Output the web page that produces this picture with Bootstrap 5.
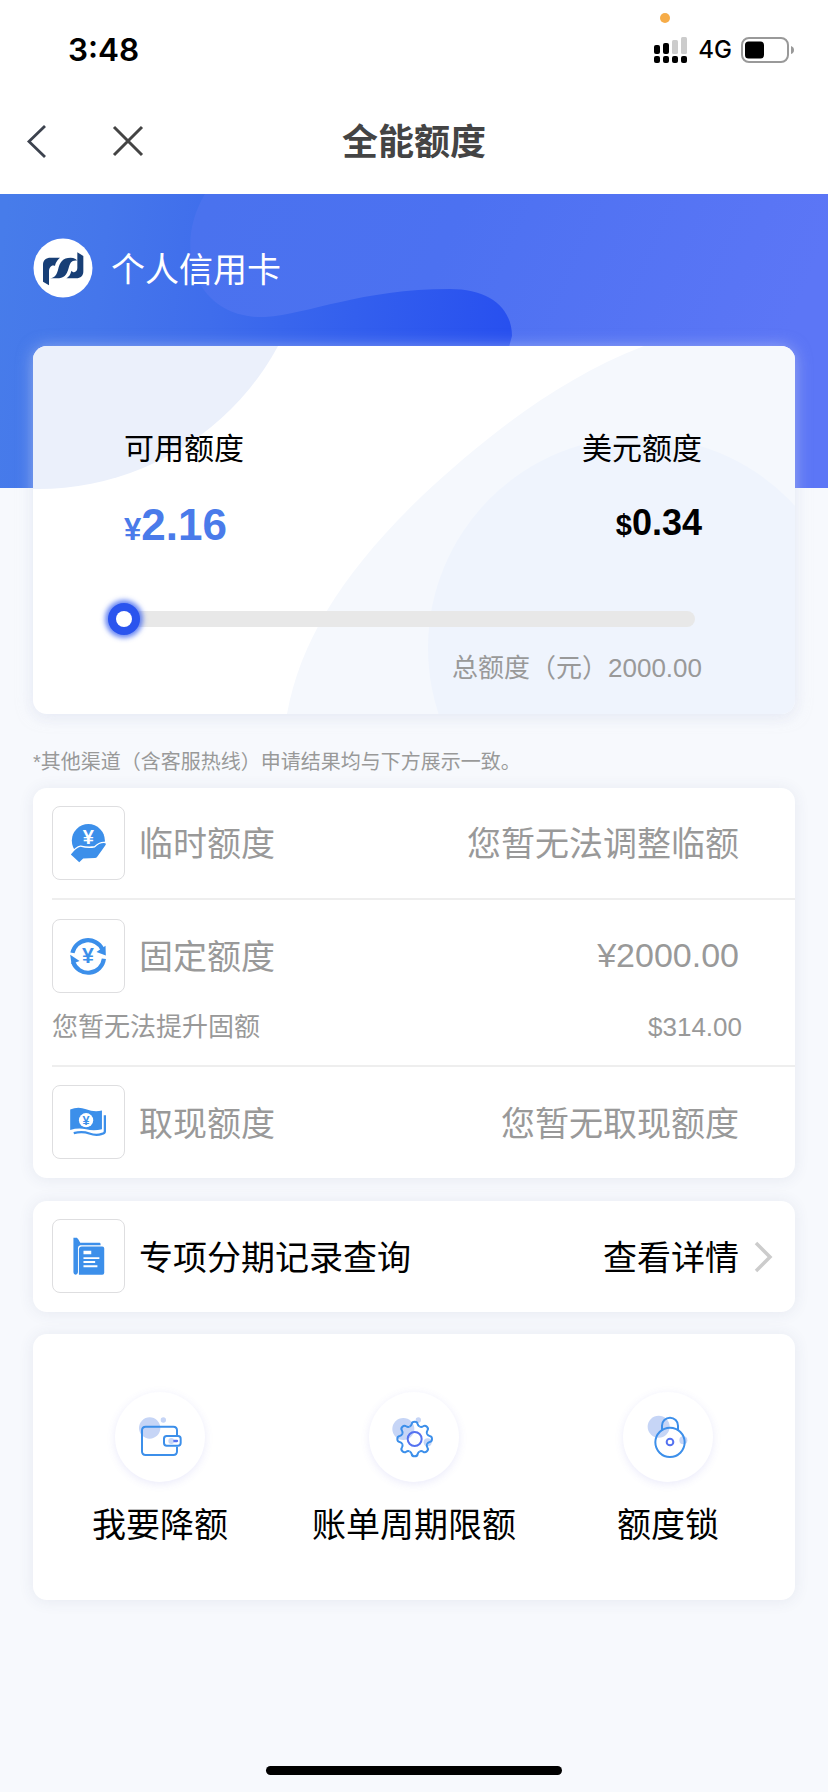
<!DOCTYPE html>
<html lang="zh-CN">
<head>
<meta charset="utf-8">
<meta name="viewport" content="width=device-width, initial-scale=1">
<title>全能额度</title>
<link href="https://cdn.jsdelivr.net/npm/bootstrap@5.3.0/dist/css/bootstrap.min.css" rel="stylesheet">
<style>
  body { font-family: "Liberation Sans", "Noto Sans CJK SC", sans-serif; background: #f7f9fd; color: #000; min-height: 1792px; line-height: 1; }
  svg { display: block; flex: none; }
  .status-bar { height: 98px; padding: 2px 33px 0 68px; font-family: Inter, sans-serif; background: #fff; }
  .clock { font-size: 31.5px; font-weight: 600; }
  .net { font-size: 24px; font-weight: 500; margin: 0 9px 0 11px; }
  .rec-dot { width: 10px; height: 10px; left: 660px; top: 13px; background: #f6ac48; }
  .title-bar { height: 96px; padding-left: 26px; background: #fff; }
  .title-bar h1 { font-size: 36px; font-weight: 700; color: #444; left: 0; right: 0; top: 25px; line-height: 40px; }
  .hero { padding: 44px 33px 0; }
  .hero-bg { left: 0; top: 0; }
  .owner { height: 60px; font-size: 34px; color: #fff; gap: 18px; margin-bottom: 48px; }
  .owner span { padding-top: 3px; }
  .panel { border-radius: 14px; background: #fff; box-shadow: 0 1px 16px rgba(60, 70, 110, .09); }
  .limit-card { height: 368px; padding: 85px 93px 0 91px; border-radius: 14px; background: #fff; box-shadow: 0 1px 16px rgba(225, 232, 250, .5), 0 4px 14px rgba(60, 70, 110, .06); }
  .limit-bg { left: 0; top: 0; border-radius: 14px; }
  .limit-name { font-size: 30px; line-height: 36px; }
  .amount { font-weight: 700; line-height: 50px; white-space: nowrap; }
  .cny { font-size: 44px; color: #4a7bea; margin-top: 33px; }
  .cny span { font-size: 31px; }
  .usd { font-size: 36px; margin-top: 31px; }
  .usd span { font-size: 29px; }
  .track { height: 16px; border-radius: 8px; background: #e8e8e8; margin: 56px 7px 0 0; }
  .knob { width: 32px; height: 32px; left: -16px; top: -8px; background: #2a54ee; box-shadow: 0 0 5px 3px rgba(42, 84, 238, .7); }
  .knob::after { content: ""; position: absolute; left: 8px; top: 8px; width: 16px; height: 16px; border-radius: 50%; background: #fff; }
  .sum { font-size: 26px; line-height: 32px; color: #999; margin-top: 25px; }
  .hint { font-size: 20px; line-height: 26px; color: #999; margin: 35px 33px 13px; }
  .lists { display: flex; flex-direction: column; gap: 23px; margin: 0 33px; }
  .entry { height: 110px; padding-right: 56px; font-size: 34px; line-height: 40px; }
  .entry-box { margin-left: 19px; }
  .rule { border-bottom: 2px solid #eee; }
  .tile { width: 73px; height: 74px; border: 1px solid #dedee0; border-radius: 8px; margin: -1px 14px 0 0; }
  .entry > span { padding-top: 2px; }
  .entry .num { padding: 0 0 2px; }
  .dim { color: #999; }
  .fixed-limit { height: 167px; }
  .fixed-limit .entry { height: 112px; }
  .sub { font-size: 26px; line-height: 30px; padding-right: 53px; }
  .tail { height: 111px; }
  .go { margin: 0 -35px 0 15px; }
  .round-ico { width: 90px; height: 90px; box-shadow: 0 2px 8px rgba(90, 90, 220, .13); margin-bottom: 23px; }
  .actions { height: 266px; padding-top: 58px; margin-top: -1px; font-size: 34px; line-height: 40px; }
  .home-bar { width: 296px; height: 9px; left: 266px; top: 1766px; background: #000; }
</style>
</head>
<body class="position-relative">
<header>
  <div class="status-bar d-flex align-items-center position-relative">
    <span class="rec-dot rounded-circle position-absolute"></span>
    <span class="clock me-auto">3:48</span>
    <svg width="33" height="28" viewBox="0 0 33 28"><g fill="#ccc"><rect x="18" y="4" width="6" height="14" rx="1.5"/><rect x="27" y="1" width="6" height="17" rx="1.5"/></g><rect y="9" width="6" height="9" rx="2"/><rect x="9" y="7" width="6" height="11" rx="2"/><rect y="20" width="6" height="7" rx="2"/><rect x="9" y="20" width="6" height="7" rx="2"/><rect x="18" y="20" width="6" height="7" rx="2"/><rect x="27" y="20" width="6" height="7" rx="2"/></svg>
    <span class="net">4G</span>
    <svg width="54" height="26" viewBox="0 0 54 26"><rect x="1" y="1" width="46" height="24" rx="7" fill="none" stroke="#999" stroke-width="2"/><rect x="4" y="4.500" width="19" height="17" rx="3.500"/><path d="M50 9q3 1 3 4t-3 4z" fill="#999"/></svg>
  </div>
  <div class="title-bar d-flex position-relative">
    <svg width="22" height="88" viewBox="0 0 22 88"><path d="M19 28 3 43.500 19 59" fill="none" stroke="#3c424e" stroke-width="2.800"/></svg>
    <svg class="ms-5" width="66" height="88" viewBox="0 0 66 88"><path d="M18 29 46 57M46 29 18 57" fill="none" stroke="#444" stroke-width="3"/></svg>
    <h1 class="position-absolute text-center m-0">全能额度</h1>
  </div>
</header>

<section class="hero position-relative">
  <svg class="hero-bg position-absolute" width="828" height="294" viewBox="0 0 828 294">
    <defs>
      <linearGradient id="sky" x1="0" y1="0" x2="1" y2=".15"><stop offset="0" stop-color="#477cea"/><stop offset=".25" stop-color="#4a72ee"/><stop offset=".55" stop-color="#4c71f1"/><stop offset="1" stop-color="#5c76f6"/></linearGradient>
      <linearGradient id="wave" gradientUnits="userSpaceOnUse" x1="0" y1="60" x2="510" y2="120"><stop offset="0" stop-color="#477cea"/><stop offset=".2" stop-color="#4576eb"/><stop offset=".42" stop-color="#3f6dec"/><stop offset=".7" stop-color="#335fee"/><stop offset="1" stop-color="#2850ef"/></linearGradient>
    </defs>
    <rect width="828" height="294" fill="url(#sky)"/>
    <path d="M0 0H205C190 25 185 55 197 84C210 112 236 124 265 123C310 120 360 95 450 95C488 95 512 113 512 142L507 160V294H0Z" fill="url(#wave)"/>
  </svg>
  <div class="owner d-flex align-items-center position-relative">
    <svg width="60" height="60" viewBox="37 52 180 180"><circle cx="127" cy="142" r="88.500" fill="#fff"/><g fill="#183f76"><path d="M67 183V132C67 118 76 111 90 111H118C106 122 104 130 103 136C94 131 85 139 85 152V194Z"/><path d="M88 173C105 170 107 162 112 148C117 124 126 111 150 111C161 111 167 115 169 120C152 118 148 128 144 142C138 164 130 173 108 173Z"/><path d="M170 95 188 106V152C188 166 180 173 166 173H137C148 166 150 158 152 150C158 158 170 155 170 142Z"/></g></svg>
    <span>个人信用卡</span>
  </div>
  <div class="limit-card position-relative">
    <svg class="limit-bg position-absolute" width="762" height="368" viewBox="33 346 762 368">
      <circle cx="38" cy="216" r="273" fill="#ebf0fb"/>
      <path d="M287 714C300 640 345 570 422 496C480 442 555 380 644 346H795V714Z" fill="#f5f8fd"/>
      <circle cx="639" cy="648" r="211" fill="#eff4fd"/>
    </svg>
    <div class="position-relative">
      <div class="d-flex justify-content-between">
        <div><div class="limit-name">可用额度</div><div class="amount cny"><span>¥</span>2.16</div></div>
        <div class="text-end"><div class="limit-name">美元额度</div><div class="amount usd"><span>$</span>0.34</div></div>
      </div>
      <div class="track position-relative"><span class="knob rounded-circle position-absolute"></span></div>
      <div class="sum text-end">总额度（元）2000.00</div>
    </div>
  </div>
</section>

<p class="hint">*其他渠道（含客服热线）申请结果均与下方展示一致。</p>

<main class="lists">
  <div class="panel">
    <div class="entry-box rule">
      <div class="entry d-flex align-items-center dim">
        <svg class="tile" viewBox="0 0 219 219"><circle cx="109" cy="102" r="51" fill="#3c8fea"/><path d="M55 145 Q72 123 85 121 Q108 127 129 123 Q145 107 162 110 Q165 113 160 119 L137 151 Q134 156 129 156 L93 157 81 169Z" fill="#3c8fea" stroke="#fff" stroke-width="8" paint-order="stroke" stroke-linejoin="round"/><text x="109" y="113" text-anchor="middle" font-family="Liberation Sans" font-weight="700" font-size="62" fill="#fff">¥</text></svg>
        <span class="me-auto">临时额度</span><span>您暂无法调整临额</span>
      </div>
    </div>
    <div class="entry-box rule fixed-limit">
      <div class="entry d-flex align-items-center dim">
        <svg class="tile" viewBox="0 0 219 219"><g fill="none" stroke="#3c8fea" stroke-width="13"><path d="M60 100A49 49 0 0 1 152 88"/><path d="M157 118A49 49 0 0 1 62 128"/></g><path d="M134 97 163 108 162 78ZM53 106 82 125 57 134Z" fill="#3c8fea"/><text x="108" y="132" text-anchor="middle" font-family="Liberation Sans" font-weight="700" font-size="66" fill="#3c8fea">¥</text></svg>
        <span class="me-auto">固定额度</span><span class="num">¥2000.00</span>
      </div>
      <div class="sub d-flex justify-content-between dim"><span>您暂无法提升固额</span><span>$314.00</span></div>
    </div>
    <div class="entry-box">
      <div class="entry tail d-flex align-items-center dim">
        <svg class="tile" viewBox="0 0 219 219"><path d="M53 71Q77 60 102 70T151 74V132Q125 138 102 132T53 134Z" fill="#3c8fea"/><circle cx="102" cy="104" r="22" fill="#fff"/><path d="M64 144Q90 137 112 145T151 146Q160 145 160 138V89" fill="none" stroke="#3c8fea" stroke-width="7"/><text x="102" y="118" text-anchor="middle" font-family="Liberation Sans" font-weight="700" font-size="39" fill="#3c8fea">¥</text></svg>
        <span class="me-auto">取现额度</span><span>您暂无取现额度</span>
      </div>
    </div>
  </div>

  <div class="panel">
    <div class="entry-box">
      <div class="entry tail d-flex align-items-center">
        <svg class="tile" viewBox="0 0 219 219"><path d="M63 53H74Q79 57 84 69H144Q147 69 147 76H84Q77 77 77 85V160Q76 167 70 167Q63 167 63 160Z" fill="#3c8fea"/><path d="M89 80H152Q158 80 158 86V161Q158 167 152 167H80V89Q80 80 89 80Z" fill="#3c8fea"/><path d="M94 93H118V104H94ZM94 113H143V119H94ZM94 125H130V131H94ZM94 138H137V144H94Z" fill="#fff"/></svg>
        <span class="me-auto">专项分期记录查询</span><span>查看详情</span>
        <svg class="go" width="20" height="32" viewBox="0 0 20 32"><path d="M2 2 16 16 2 30" fill="none" stroke="#ccc" stroke-width="3.500"/></svg>
      </div>
    </div>
  </div>

  <div class="panel actions">
    <div class="row g-0 text-center">
      <div class="col-4 d-flex flex-column align-items-center">
        <svg class="round-ico rounded-circle" viewBox="-135 -135 270 270"><circle cx="-31" cy="-27" r="32" fill="#c6d5f6"/><circle cx="10" cy="-51" r="8" fill="#c6d5f6"/><path d="M51 -6V-20Q51 -31 40 -31H-43Q-54 -31 -54 -20V43Q-54 54 -43 54H40Q51 54 51 43V29" fill="none" stroke="#3c8fea" stroke-width="6"/><rect x="12" y="-3" width="50" height="29" rx="8" fill="#fff" stroke="#3c8fea" stroke-width="6"/><circle cx="34" cy="12" r="9" fill="#c6d5f6"/><path d="M43 12H51" stroke="#5572f0" stroke-width="7" stroke-linecap="round"/></svg>
        <span>我要降额</span>
      </div>
      <div class="col-4 d-flex flex-column align-items-center">
        <svg class="round-ico rounded-circle" viewBox="-135 -135 270 270"><g fill="#c6d5f6"><circle cx="-32" cy="-24" r="33"/><circle cx="13" cy="-51" r="8"/><circle cx="41" cy="16" r="12"/></g><defs><path id="tooth" d="M-15.300-37Q-10-39.500-9-45Q-8-52 0-52Q8-52 9-45Q10-39.500 15.300-37"/></defs><g transform="translate(2 6)" fill="none" stroke="#3c8fea" stroke-width="6"><use href="#tooth"/><use href="#tooth" transform="rotate(45)"/><use href="#tooth" transform="rotate(90)"/><use href="#tooth" transform="rotate(135)"/><use href="#tooth" transform="rotate(180)"/><use href="#tooth" transform="rotate(225)"/><use href="#tooth" transform="rotate(270)"/><use href="#tooth" transform="rotate(315)"/><circle r="21" stroke="#5572f0"/></g></svg>
        <span>账单周期限额</span>
      </div>
      <div class="col-4 d-flex flex-column align-items-center">
        <svg class="round-ico rounded-circle" viewBox="-135 -135 270 270"><g fill="#c6d5f6"><circle cx="-28" cy="-31" r="33"/><circle cx="46" cy="10" r="12"/></g><g fill="none" stroke="#3c8fea" stroke-width="6"><circle cx="6" cy="16" r="44"/><path d="M-18 -19V-34A24 24 0 0 1 30 -34V-19"/><circle cx="6" cy="15" r="10" stroke="#5572f0"/></g></svg>
        <span>额度锁</span>
      </div>
    </div>
  </div>
</main>
<div class="home-bar rounded-pill position-absolute"></div>
<script src="https://cdn.jsdelivr.net/npm/bootstrap@5.3.0/dist/js/bootstrap.bundle.min.js"></script>
</body>
</html>
